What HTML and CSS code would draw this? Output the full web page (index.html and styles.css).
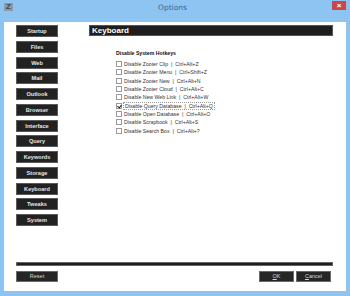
FILE: index.html
```html
<!DOCTYPE html>
<html lang="en">
<head>
  <meta charset="UTF-8" />
  <title>Options</title>
  <link rel="stylesheet" href="styles.css">
</head>
<body>
  <div class="window">
    <!-- Title bar -->
    <div class="titlebar">
      <span class="app-icon">Z</span>
      <span class="title">Options</span>
      <span class="close">&#215;</span>
    </div>

    <div class="client">
      <div class="top">
        <!-- Left nav -->
        <div class="nav">
          <div class="nav-btn">Startup</div>
          <div class="nav-btn">Files</div>
          <div class="nav-btn">Web</div>
          <div class="nav-btn">Mail</div>
          <div class="nav-btn">Outlook</div>
          <div class="nav-btn">Browser</div>
          <div class="nav-btn">Interface</div>
          <div class="nav-btn">Query</div>
          <div class="nav-btn">Keywords</div>
          <div class="nav-btn">Storage</div>
          <div class="nav-btn">Keyboard</div>
          <div class="nav-btn">Tweaks</div>
          <div class="nav-btn">System</div>
        </div>

        <!-- Panel -->
        <div class="panel">
          <div class="panel-head">Keyboard</div>
          <div class="group">
            <div class="group-title">Disable System Hotkeys</div>
            <label class="row"><span class="box"></span>Disable Zooter Clip &nbsp;|&nbsp; Ctrl+Alt+Z</label>
            <label class="row"><span class="box"></span>Disable Zooter Menu &nbsp;|&nbsp; Ctrl+Shift+Z</label>
            <label class="row"><span class="box"></span>Disable Zooter New &nbsp;|&nbsp; Ctrl+Alt+N</label>
            <label class="row"><span class="box"></span>Disable Zooter Cloud &nbsp;|&nbsp; Ctrl+Alt+C</label>
            <label class="row"><span class="box"></span>Disable New Web Link &nbsp;|&nbsp; Ctrl+Alt+W</label>
            <label class="row"><span class="box checked"></span><span class="focus">Disable Query Database &nbsp;|&nbsp; Ctrl+Alt+Q</span></label>
            <label class="row"><span class="box"></span>Disable Open Database &nbsp;|&nbsp; Ctrl+Alt+O</label>
            <label class="row"><span class="box"></span>Disable Scrapbook &nbsp;|&nbsp; Ctrl+Alt+S</label>
            <label class="row"><span class="box"></span>Disable Search Box &nbsp;|&nbsp; Ctrl+Alt+?</label>
          </div>
        </div>
      </div>

      <div class="separator"></div>

      <!-- Footer buttons -->
      <div class="footer">
        <div class="btn">Reset</div>
        <div class="spacer"></div>
        <div class="btn small"><u>O</u>K</div>
        <div class="btn small"><u>C</u>ancel</div>
      </div>
    </div>
  </div>
</body>
</html>
```

FILE: styles.css
```css
* {
  box-sizing: border-box;
  margin: 0;
  padding: 0;
}

body {
  width: 350px;
  height: 296px;
  font-family: 'Liberation Sans', Arial, sans-serif;
  overflow: hidden;
}

.window {
  width: 350px;
  height: 296px;
  background-color: #8ec4f2;
  padding: 0 4px 5px 4px;
  display: flex;
  flex-direction: column;
}

/* Title bar */
.titlebar {
  height: 22px;
  display: flex;
  align-items: flex-start;
}

.app-icon {
  margin-top: 3px;
  width: 9px;
  height: 8px;
  background: #8a9aa8;
  color: #3c4650;
  font-size: 8px;
  font-weight: bold;
  line-height: 8px;
  text-align: center;
}

.title {
  flex: 1;
  text-align: center;
  font-family: 'DejaVu Sans', sans-serif;
  font-size: 7.5px;
  color: #3a6590;
  margin-top: 3px;
}

.close {
  margin-top: 1px;
  width: 14px;
  height: 9px;
  background-color: #c9474a;
  color: white;
  font-size: 8px;
  font-weight: bold;
  line-height: 9px;
  text-align: center;
}

/* Client area */
.client {
  flex: 1;
  background: #fff;
  padding: 3px 13px 0 12px;
  display: flex;
  flex-direction: column;
}

.top {
  height: 237px;
  display: flex;
}

.nav {
  width: 42px;
  display: flex;
  flex-direction: column;
  gap: 3.75px;
}

.nav-btn {
  height: 12px;
  background: #222;
  border: 1px solid #5a5a5a;
  color: #e6e6e6;
  font-size: 5.6px;
  font-weight: bold;
  line-height: 10px;
  text-align: center;
}

.panel {
  margin-left: 31px;
  flex: 1;
}

.panel-head {
  height: 11px;
  background: #1e1e1e;
  border: 1px solid #555;
  color: #fff;
  font-size: 8px;
  font-weight: bold;
  line-height: 9px;
  padding-left: 2px;
}

.group {
  padding: 14px 0 0 27px;
}

.group-title {
  font-size: 5.2px;
  font-weight: bold;
  color: #111;
  height: 10px;
  line-height: 6px;
}

.row {
  display: flex;
  align-items: center;
  height: 8.33px;
  font-size: 5.2px;
  color: #333;
  white-space: nowrap;
}

.box {
  flex-shrink: 0;
  width: 6px;
  height: 6px;
  border: 1px solid #9a9a9a;
  background: #fff;
  margin-right: 2px;
  position: relative;
}

.box.checked::after {
  content: '';
  position: absolute;
  left: 1px;
  top: 0;
  width: 2px;
  height: 3px;
  border-right: 1px solid #222;
  border-bottom: 1px solid #222;
  transform: rotate(40deg);
}

.focus {
  display: inline-block;
  line-height: 6px;
  border: 1px dotted #999;
  padding: 0 1px;
  margin-left: -1px;
}

.separator {
  height: 4px;
  background: #1e1e1e;
  border: 1px solid #666;
}

.footer {
  margin-top: 5px;
  display: flex;
  gap: 2px;
}

.spacer {
  flex: 1;
}

.btn {
  width: 42px;
  height: 11px;
  background: #262626;
  border: 1px solid #6a6a6a;
  color: #d8d8d8;
  font-size: 5.5px;
  line-height: 9px;
  text-align: center;
}

.btn.small {
  width: 35px;
}

.btn.small:last-child {
  margin-right: 2px;
}
```
